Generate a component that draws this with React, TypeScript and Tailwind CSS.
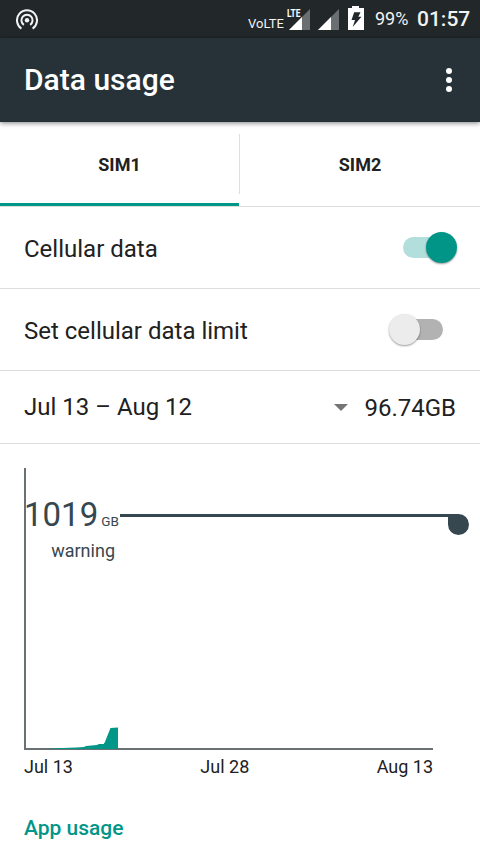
import React, { useState } from 'react';
import clsx from 'clsx';

function StatusBar() {
  return (
    <div className="flex h-[38px] items-center bg-[#22272a] text-[#f2f3f3]">
      <svg className="ml-4 mt-px h-[22px] w-[22px]" viewBox="0 0 22 22" fill="none" stroke="currentColor" strokeWidth="2">
        <path d="M5.4 19.6A10 10 0 1 1 16.6 19.6" />
        <path d="M7.9 15.9A5.6 5.6 0 1 1 14.1 15.9" />
        <circle cx="11" cy="11.3" r="2.2" fill="currentColor" stroke="none" />
      </svg>
      <div className="flex-1" />
      <span className="mt-2.5 w-[33px] text-[13px] leading-4 whitespace-nowrap">VoLTE</span>
      <svg className="ml-[6px] h-[38px] w-[82px]" viewBox="0 0 82 38">
        <path d="M23 9V30H2Z" fill="#6a6f71" />
        <path d="M15 17V30H2Z" fill="#fff" />
        <text x="0" y="17.4" fill="#fff" fontFamily="Roboto, sans-serif" fontSize="11.5" fontWeight="700" textLength="13.5" lengthAdjust="spacingAndGlyphs">LTE</text>
        <path d="M52 9V30H31Z" fill="#6a6f71" />
        <path d="M44 17V30H31Z" fill="#fff" />
        <path d="M65 6h7v2h5v22H61V8h4Z" fill="#fff" />
        <path d="M67.2 12.2h6.3l-2.2 4.6h3.2L65.7 27l2.3-7H64.5Z" fill="#22272a" />
      </svg>
      <span className="ml-[6px] w-[33px] text-[18px] leading-6 whitespace-nowrap">99%</span>
      <span className="ml-[9px] mr-[9px] w-[54px] text-[21px] leading-6 font-medium whitespace-nowrap">01:57</span>
    </div>
  );
}

function AppBar() {
  return (
    <header className="relative flex h-[84px] items-center justify-between bg-[#263238] pl-6 pr-[28px] text-white shadow-[0_1px_5px_rgba(0,0,0,0.5)]">
      <h1 className="text-[30px] leading-9 font-medium">Data usage</h1>
      <button className="flex flex-col gap-[3px]" aria-label="More options">
        <span className="size-1.5 rounded-full bg-white" />
        <span className="size-1.5 rounded-full bg-white" />
        <span className="size-1.5 rounded-full bg-white" />
      </button>
    </header>
  );
}

interface SwitchProps {
  checked: boolean;
  onToggle: () => void;
}

function Switch({ checked, onToggle }: SwitchProps) {
  return (
    <button
      role="switch"
      aria-checked={checked}
      onClick={onToggle}
      className={clsx('flex h-[21px] w-[46px] items-center rounded-full', checked ? 'bg-[#b2dfdb]' : 'bg-[#b2b2b2]')}
    >
      <span
        className={clsx(
          'size-[31px] shrink-0 rounded-full shadow-[0_1px_2px_rgba(0,0,0,0.4)]',
          checked ? 'ml-[23px] bg-[#009587]' : '-ml-[8px] bg-[#ececec]'
        )}
      />
    </button>
  );
}

function UsageChart() {
  return (
    <section className="px-6 pt-6">
      <div className="relative h-[282px]">
        <svg className="absolute top-0 left-0 h-[282px] w-[446px]" viewBox="0 0 446 282">
          <path d="M0 0H2V280H409V282H0Z" fill="#6b7073" />
          <path d="M20 281L38 280L52 279.5L60 279L62 278L73 277L75 276L80 276L80 275L80.5 275L86.5 260L94 259.4V281Z" fill="#009688" />
          <path d="M96 46H434.5A10.5 10.5 0 1 1 424 56.5V49H96Z" fill="#37474f" />
        </svg>
        <div className="w-[91px] pt-[28px] text-right text-[#37474f]">
          <div className="text-[33px] leading-[38px] whitespace-nowrap">
            1019<span className="ml-[3px] text-[13.5px]">GB</span>
          </div>
          <div className="-mt-px text-[18px] leading-6">warning</div>
        </div>
      </div>
      <div className="mt-[5px] flex w-[409px] justify-between text-[18px] leading-6">
        <span>Jul 13</span>
        <span>Jul 28</span>
        <span>Aug 13</span>
      </div>
    </section>
  );
}

export default function App() {
  const [sim, setSim] = useState('SIM1');
  const [cellular, setCellular] = useState(true);
  const [limit, setLimit] = useState(false);

  return (
    <div className="h-[854px] w-[480px] overflow-hidden bg-white font-['Roboto',sans-serif] text-[#212121]">
      <StatusBar />
      <AppBar />
      <nav className="flex h-[85px] border-b border-[#dedede]">
        <button
          onClick={() => setSim('SIM1')}
          className={clsx('w-[239px] border-b-[3px] pt-[3px] text-[18px] font-bold', sim === 'SIM1' ? 'border-[#009688]' : 'border-transparent')}
        >
          SIM1
        </button>
        <div className="my-3 w-px bg-[#dedede]" />
        <button
          onClick={() => setSim('SIM2')}
          className={clsx('flex-1 border-b-[3px] pt-[3px] text-[18px] font-bold', sim === 'SIM2' ? 'border-[#009688]' : 'border-transparent')}
        >
          SIM2
        </button>
      </nav>

      <div className="flex h-[82px] items-center justify-between border-b border-[#dedede] pl-6 pr-[31px]">
        <span className="pt-[3px] text-[24px] leading-8">Cellular data</span>
        <Switch checked={cellular} onToggle={() => setCellular(!cellular)} />
      </div>
      <div className="flex h-[82px] items-center justify-between border-b border-[#dedede] pl-6 pr-[37px]">
        <span className="pt-[3px] text-[24px] leading-8">Set cellular data limit</span>
        <Switch checked={limit} onToggle={() => setLimit(!limit)} />
      </div>
      <div className="flex h-[73px] items-center border-b border-[#dedede] px-6 text-[24px] leading-8">
        <span className="flex-1">Jul 13 – Aug 12</span>
        <svg className="mr-4 h-[7px] w-[14px]" viewBox="0 0 14 7">
          <path d="M0 0H14L7 7Z" fill="#757575" />
        </svg>
        <span className="pt-px">96.74GB</span>
      </div>

      <UsageChart />
      <h2 className="px-6 pt-[35px] text-[21px] leading-7 font-medium text-[#009688]">App usage</h2>
    </div>
  );
}
